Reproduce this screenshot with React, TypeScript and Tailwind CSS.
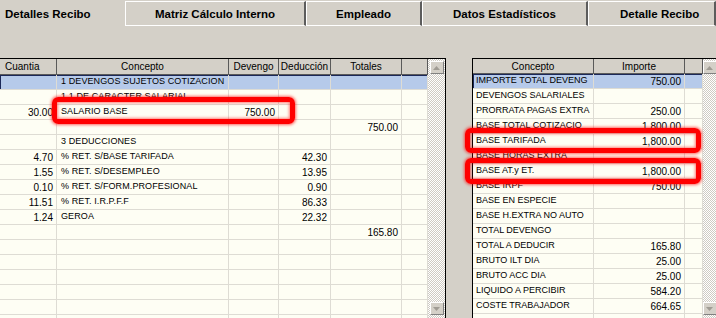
import React from "react";

type LeftRow = [string, string, string, string, string];
type RightRow = [string, string];

const leftRows: LeftRow[] = [
  ["", "1 DEVENGOS SUJETOS COTIZACION", "", "", ""],
  ["", "1.1 DE CARACTER SALARIAL", "", "", ""],
  ["30.00", "SALARIO BASE", "750.00", "", ""],
  ["", "", "", "", "750.00"],
  ["", "3 DEDUCCIONES", "", "", ""],
  ["4.70", "% RET. S/BASE TARIFADA", "", "42.30", ""],
  ["1.55", "% RET. S/DESEMPLEO", "", "13.95", ""],
  ["0.10", "% RET. S/FORM.PROFESIONAL", "", "0.90", ""],
  ["11.51", "% RET. I.R.P.F.F", "", "86.33", ""],
  ["1.24", "GEROA", "", "22.32", ""],
  ["", "", "", "", "165.80"],
  ["", "", "", "", ""],
  ["", "", "", "", ""],
  ["", "", "", "", ""],
  ["", "", "", "", ""],
  ["", "", "", "", ""],
  ["", "", "", "", ""],
];

const rightRows: RightRow[] = [
  ["IMPORTE TOTAL DEVENG", "750.00"],
  ["DEVENGOS SALARIALES", ""],
  ["PRORRATA PAGAS EXTRA", "250.00"],
  ["BASE TOTAL COTIZACIO", "1,800.00"],
  ["BASE TARIFADA", "1,800.00"],
  ["BASE HORAS EXTRA", ""],
  ["BASE AT.y ET.", "1,800.00"],
  ["BASE IRPF", "750.00"],
  ["BASE EN ESPECIE", ""],
  ["BASE H.EXTRA NO AUTO", ""],
  ["TOTAL DEVENGO", ""],
  ["TOTAL A DEDUCIR", "165.80"],
  ["BRUTO ILT DIA", "25.00"],
  ["BRUTO ACC DIA", "25.00"],
  ["LIQUIDO A PERCIBIR", "584.20"],
  ["COSTE TRABAJADOR", "664.65"],
  ["", ""],
];

const tabs = [
  { label: "Matriz Cálculo Interno", w: "w-[181px]", extra: "justify-center" },
  { label: "Empleado", w: "w-[116px]", extra: "justify-center" },
  { label: "Datos Estadísticos", w: "w-[166px]", extra: "justify-center" },
  { label: "Detalle Recibo", w: "w-[128px]", extra: "justify-start pl-[31px]" },
];

const cell = "h-[15px] border-r border-b border-[#dedcd4] flex items-center overflow-hidden whitespace-nowrap";
const num = "justify-end pr-[3px] text-[10px]";
const txt = "pl-[4px] text-[9px] tracking-[0.1px]";
const head = "h-full border-r border-[#5a5a5a] flex items-center justify-center text-[10px]";

const ScrollBtn = ({ down }: { down?: boolean }) => (
  <div className="w-[14px] h-[13px] bg-[#d4d0c8] border border-t-white border-l-white border-r-[#808080] border-b-[#808080] flex items-center justify-center">
    <svg width="7" height="4" viewBox="0 0 7 4">
      <polygon points={down ? "0,0 7,0 3.5,4" : "0,4 7,4 3.5,0"} fill="#a09c94" />
    </svg>
  </div>
);

const ScrollBar = ({ w }: { w: string }) => (
  <div
    className={`${w} flex flex-col items-center justify-between pt-[2px] pb-[3px] bg-[image:repeating-conic-gradient(#ffffff_0%_25%,#cfcbc3_0%_50%)] bg-[length:2px_2px]`}
  >
    <ScrollBtn />
    <ScrollBtn down />
  </div>
);

const RedBox = ({ pos }: { pos: string }) => (
  <div
    className={`absolute ${pos} border-[5px] border-[#ff0000] rounded-[6px] shadow-[0_0_3px_1px_rgba(255,0,0,0.6),inset_0_0_3px_1px_rgba(255,0,0,0.5)]`}
  />
);

export default function App() {
  return (
    <div className="relative w-[716px] h-[318px] overflow-hidden bg-[#d4d0c8] text-black font-['Liberation_Sans',Arial,sans-serif]">
      {/* tabs */}
      <div className="flex h-[26px]">
        <div className="w-[125px] flex items-start pt-[6px] pl-[5px] text-[11.5px] font-bold">
          Detalles Recibo
        </div>
        {tabs.map((t) => (
          <div
            key={t.label}
            className={`${t.w} ${t.extra} flex items-center pt-[3px] mt-[1px] border-t border-l border-b border-white border-r-2 border-r-[#5c5c5c] text-[11.5px] font-bold`}
          >
            {t.label}
          </div>
        ))}
      </div>

      <div className="h-[32px]" />

      <div className="flex h-[260px]">
        {/* left grid */}
        <div className="flex w-[446px] border-t border-r border-black">
          <div className="w-[428px] flex flex-col bg-[#fefef4] overflow-hidden">
            <div className="grid grid-cols-[57px_172px_50px_52px_71px_26px] h-[16px] shrink-0 bg-[#d4d0c8] border-b border-[#5a5a5a]">
              <div className={`${head} justify-start pl-[5px]`}>Cuantia</div>
              <div className={head}>Concepto</div>
              <div className={head}>Devengo</div>
              <div className={head}>Deducción</div>
              <div className={head}>Totales</div>
              <div className={head} />
            </div>
            {leftRows.map((r, i) => (
              <div
                key={i}
                className={`grid grid-cols-[57px_172px_50px_52px_71px_26px] shrink-0 ${
                  i === 0 ? "bg-[#b6caea] shadow-[inset_0_0_0_1px_#1c2858]" : ""
                }`}
              >
                <div className={`${cell} ${num}`}>{r[0]}</div>
                <div className={`${cell} ${txt}`}>{r[1]}</div>
                <div className={`${cell} ${num}`}>{r[2]}</div>
                <div className={`${cell} ${num}`}>{r[3]}</div>
                <div className={`${cell} ${num}`}>{r[4]}</div>
                <div className={cell} />
              </div>
            ))}
          </div>
          <ScrollBar w="w-[17px]" />
        </div>

        <div className="w-[26px]" />

        {/* right grid */}
        <div className="flex flex-1 border-t border-l border-black">
          <div className="w-[230px] flex flex-col bg-[#fefef4] overflow-hidden">
            <div className="grid grid-cols-[121px_91px_18px] h-[15px] shrink-0 bg-[#d4d0c8] border-b border-[#5a5a5a]">
              <div className={head}>Concepto</div>
              <div className={head}>Importe</div>
              <div className={head} />
            </div>
            {rightRows.map((r, i) => (
              <div
                key={i}
                className={`grid grid-cols-[121px_91px_18px] shrink-0 ${
                  i === 0 ? "bg-[#b6caea] shadow-[inset_0_0_0_1px_#1c2858]" : ""
                }`}
              >
                <div className={`${cell} pl-[3px] text-[9px]`}>{r[0]}</div>
                <div className={`${cell} ${num}`}>{r[1]}</div>
                <div className={cell} />
              </div>
            ))}
          </div>
          <ScrollBar w="w-[13px]" />
        </div>
      </div>

      <RedBox pos="left-[52px] top-[97px] w-[243px] h-[27px]" />
      <RedBox pos="left-[465px] top-[128px] w-[236px] h-[25px]" />
      <RedBox pos="left-[465px] top-[158px] w-[236px] h-[26px]" />
    </div>
  );
}
